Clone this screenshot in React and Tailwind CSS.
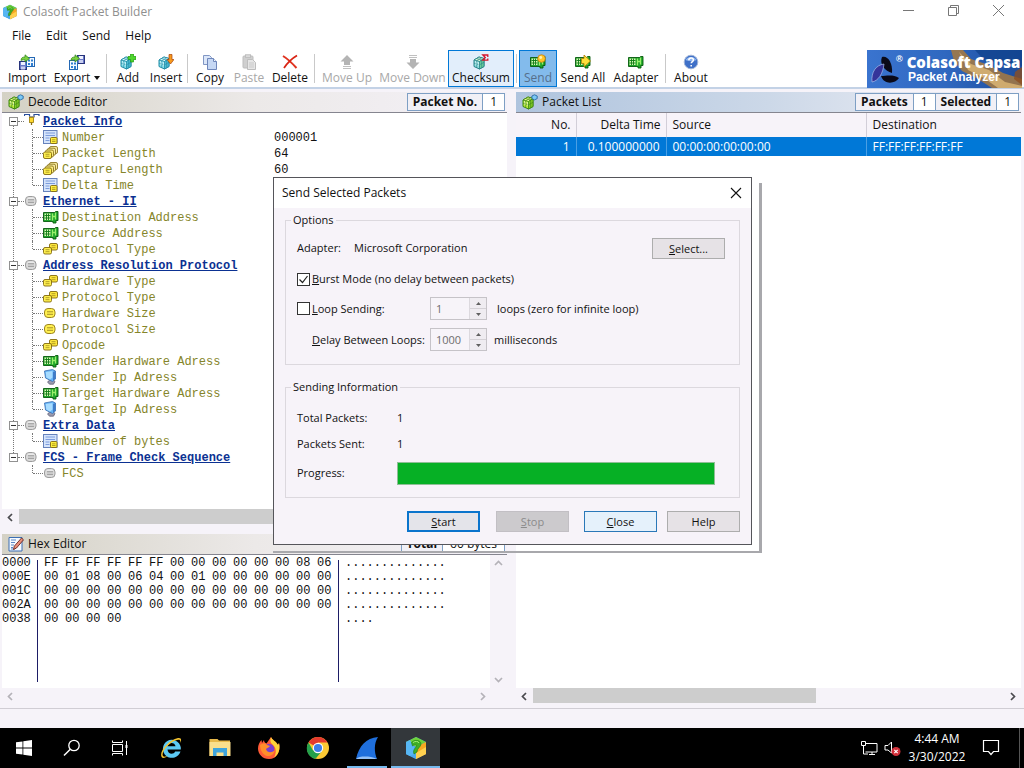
import React from "react";

/* ---------- icons ---------- */

function AppIcon({ className }) {
  return (
    <svg viewBox="0 0 24 24" className={className} aria-hidden="true">
      <path d="M12 1 22 6v12l-10 5L2 18V6z" fill="#3f9be0" />
      <path d="M12 1 22 6l-10 5L2 6z" fill="#6fd23a" />
      <path d="M2 6l10 5v12L2 18z" fill="#4aa8ec" />
      <path d="M22 6l-10 5v12l10-5z" fill="#f6a821" />
      <path d="M22 11l-10 6v6l10-5z" fill="#ffd04f" />
      <path d="M2 6l4-2 4 7v7l-4 2-4-2z" fill="#57b6f3" />
      <path d="M7.500 6.500c3-3.500 9.500-2.500 9.500 1.500 0 3-4 4-4 8l-3 2c-2-5 3.500-7 2.500-9-1-1-3 0-4 1z" fill="#3fae25" stroke="#1f7a14" strokeWidth=".6" />
      <path d="M9 6.500c2-1.500 5.500-1.500 6 .5" fill="none" stroke="#a6ee74" strokeWidth="1" />
    </svg>
  );
}

function Cube({ top, left, right, line, children, className }) {
  return (
    <svg viewBox="0 0 16 16" className={className} aria-hidden="true">
      <path d="M6 3l5 1.5v8L6.500 15 1 12.500V6z" fill={left} stroke={line} strokeWidth="1" strokeLinejoin="round" />
      <path d="M6 3l5 1.500L6.500 7.500 1 6z" fill={top} stroke={line} strokeWidth=".8" strokeLinejoin="round" />
      <path d="M11 4.500v8L6.500 15V7.500z" fill={right} stroke={line} strokeWidth=".8" strokeLinejoin="round" />
      <path d="M3.700 4.500l5 1.500v7.600M8.500 3.800L3.700 6.800v7M1 9.200l5.500 1.600L11 8.300" fill="none" stroke={line} strokeWidth=".6" />
      <path d="M2 7.500l1 .4v3M4.600 8.300l1 .3v3" fill="none" stroke="#fff" strokeWidth=".7" opacity=".8" />
      {children}
    </svg>
  );
}

const blueCube = { top: "#d4f8fa", left: "#86dfeb", right: "#4dbbd2", line: "#1f8aa4" };
const greenCube = { top: "#e6f98a", left: "#b9ea3e", right: "#83cc28", line: "#3b8510" };

function PanelCube({ className }) {
  return (
    <Cube {...greenCube} className={className}>
      <path d="M12.500 .8l2.700 1.200v2.600l-2.700 1.300-2.600-1.300V2z" fill="#7cc8f4" stroke="#1b5f9e" strokeWidth=".8" />
    </Cube>
  );
}
function AddIcon({ className }) {
  return (
    <Cube {...blueCube} className={className}>
      <path d="M10.500 0h3v2.500H16v3h-2.500V8h-3V5.500H8v-3h2.500z" fill="#4fd62c" stroke="#1f9a10" strokeWidth=".7" />
    </Cube>
  );
}
function InsertIcon({ className }) {
  return (
    <Cube {...blueCube} className={className}>
      <path d="M11 .5h3v5h2L12.500 10 9 5.500h2z" fill="#f79a1c" stroke="#a8400b" strokeWidth=".7" />
    </Cube>
  );
}
function ChecksumIcon({ className }) {
  return (
    <Cube top="#d6f7d0" left="#8fe0e0" right="#6ccf9a" line="#247f86" className={className}>
      <path d="M14.800 3V1H9.800l2.500 2.500-2.500 2.700h5V4.500" fill="none" stroke="#d3142a" strokeWidth="1.300" />
    </Cube>
  );
}

function DiskBuilding({ flip, className }) {
  return (
    <svg viewBox="0 0 16 16" className={className} aria-hidden="true">
      <rect x={flip ? 8.500 : .5} y={flip ? 1.500 : 7.500} width="7" height="8" fill="#6a78c8" stroke="#28347c" />
      <rect x={flip ? 10 : 2} y={flip ? 2 : 8} width="4" height="3" fill="#eef2ff" />
      <rect x={flip ? 10 : 2} y={flip ? 6 : 12.500} width="4" height="3" fill="#c9cff0" />
      <rect x={flip ? .5 : 7.500} y={flip ? 6.500 : 3.500} width="8" height="9" fill="#f4f9ff" stroke="#2468b4" />
      <path d={flip ? "M2 8.500h2v2H2zM5 8.500h2v2H5zM2 12h2v2H2zM5 12h2v3H5z" : "M9 5.500h2v2H9zM12 5.500h2v2h-2zM9 9h2v2H9zM12 9h2v3h-2z"} fill="#2f7fd0" />
      <path d="M2 6.500C2 3.500 4 3 6 3V.8l4.500 3.700L6 8V5.800C4 5.800 3 6 2 6.500z" fill="#7ad141" stroke="#2b7d16" strokeWidth=".7" />
    </svg>
  );
}
const ImportIcon = ({ className }) => <DiskBuilding className={className} />;
const ExportIcon = ({ className }) => <DiskBuilding flip className={className} />;

function CopyIcon({ className }) {
  return (
    <svg viewBox="0 0 16 16" className={className} aria-hidden="true">
      <path d="M1.500 1.500h6l2 2v7h-8z" fill="#dbe6f8" stroke="#8197c4" />
      <path d="M5.500 4.500h6l3 3v8h-9z" fill="#c6d8f4" stroke="#6f87bb" />
      <path d="M11.500 4.500v3h3" fill="#f2f6fd" stroke="#6f87bb" />
    </svg>
  );
}
function PasteIcon({ className }) {
  return (
    <svg viewBox="0 0 16 16" className={className} aria-hidden="true">
      <rect x="2" y="2" width="10" height="12" rx="1" fill="#cfcfcf" stroke="#bdbdbd" />
      <rect x="4.500" y=".8" width="5" height="2.600" fill="#ddd" stroke="#bdbdbd" />
      <path d="M6.500 5.500h5l3 3v7h-8z" fill="#e6e6e6" stroke="#bdbdbd" />
      <path d="M8 9h5M8 11h5M8 13h5" stroke="#c9c9c9" />
    </svg>
  );
}
function DeleteIcon({ className }) {
  return (
    <svg viewBox="0 0 16 16" className={className} aria-hidden="true">
      <path d="M1 2c5 3 9 7 13.500 12" fill="none" stroke="#e03420" strokeWidth="2" />
      <path d="M15 1.500C9 5 5 9.500 2 14" fill="none" stroke="#d92414" strokeWidth="1.800" />
    </svg>
  );
}
function UpIcon({ className }) {
  return (
    <svg viewBox="0 0 16 16" className={className} aria-hidden="true">
      <path d="M8 1l6.500 6.500H11V11H5V7.500H1.500z" fill="#b4b4b4" />
      <path d="M4 12.500h8M4 14.500h8" stroke="#c0c0c0" />
    </svg>
  );
}
function DownIcon({ className }) {
  return (
    <svg viewBox="0 0 16 16" className={className} aria-hidden="true">
      <path d="M8 15l6.500-6.500H11V5H5v3.500H1.500z" fill="#b4b4b4" />
      <path d="M4 1.500h8M4 3.500h8" stroke="#c0c0c0" />
    </svg>
  );
}

function NicBody() {
  return (
    <>
      <path d="M.5 2.500h12V1.500h2.500v9h-2V13h-3v-1.500H.5z" fill="#1ea52a" stroke="#07590c" strokeWidth=".9" />
      <rect x="1.500" y="3.500" width="6" height="6.500" fill="#d9f7b4" />
      <path d="M1.500 5.500h6M1.500 8h6M3.500 3.500v6.500M5.500 3.500v6.500" stroke="#0d7a15" strokeWidth=".9" />
      <path d="M9.500 3.500v7M12.500 2.500v7M9.500 6.500h3" stroke="#9af06a" strokeWidth="1.300" />
    </>
  );
}
function NicIcon({ className }) {
  return (
    <svg viewBox="0 0 16 16" className={className} aria-hidden="true"><g transform="translate(0 1)"><NicBody /></g></svg>
  );
}
function SendIcon({ className }) {
  return (
    <svg viewBox="0 0 16 16" className={className} aria-hidden="true">
      <g transform="translate(0 1)"><NicBody /></g>
      <circle cx="11.500" cy="4.500" r="3.800" fill="#ffc529" stroke="#c47a0a" strokeWidth=".7" />
      <circle cx="10.700" cy="3.500" r="1.400" fill="#fff3b0" />
    </svg>
  );
}
function SendAllIcon({ className }) {
  return (
    <svg viewBox="0 0 16 16" className={className} aria-hidden="true">
      <g transform="translate(0 1)"><NicBody /></g>
      <path d="M9 1l6.500 6L9 13V9.500H6.500v-5H9z" fill="#ffe03a" stroke="#a97c06" strokeWidth=".8" />
    </svg>
  );
}
function AboutIcon({ className }) {
  return (
    <svg viewBox="0 0 16 16" className={className} aria-hidden="true">
      <circle cx="8" cy="8" r="6.800" fill="#3f70c8" stroke="#9fb4d8" />
      <path d="M2.500 6a6 5 0 0 1 11 0c-3 1.500-8 1.500-11 0z" fill="#8db4ee" />
      <path d="M5.800 6.200c0-3 4.600-3 4.600-.3 0 1.600-2.200 1.700-2.200 3.400M8.200 11v1.500" fill="none" stroke="#fff" strokeWidth="1.500" />
    </svg>
  );
}

/* tree icons */
function ProbeIcon({ className }) {
  return (
    <svg viewBox="0 0 16 16" className={className} aria-hidden="true">
      <path d="M.5 3V1.500h5v1.800M10 3.300V1.500h5V3" fill="none" stroke="#2a4f9c" strokeWidth="1.200" />
      <path d="M5 3.800h6" stroke="#6b6b6b" />
      <rect x="5.500" y="4.500" width="4" height="5" fill="#ffd92e" stroke="#9a7a06" strokeWidth=".8" />
      <path d="M7.500 9.500V12" stroke="#8a6d10" strokeWidth="1.300" />
    </svg>
  );
}
function GreyIcon({ className }) {
  return (
    <svg viewBox="0 0 16 16" className={className} aria-hidden="true">
      <rect x="1.500" y="3.500" width="10.500" height="9" rx="3.500" fill="#d9d9d9" stroke="#9c9c9c" />
      <path d="M4 6.800h6M4 9.300h6" stroke="#8e8e8e" strokeWidth=".9" />
      <path d="M3.500 5.200h6.500" stroke="#f8f8f8" strokeWidth=".8" />
    </svg>
  );
}
function ByteIcon({ className }) {
  return (
    <svg viewBox="0 0 16 16" className={className} aria-hidden="true">
      <rect x="1.500" y="3.500" width="10.500" height="9" rx="3.500" fill="#fff04f" stroke="#9c8420" />
      <path d="M4 6.800h6M4 9.300h6" stroke="#9c8420" strokeWidth=".9" />
    </svg>
  );
}
function PairIcon({ className }) {
  return (
    <svg viewBox="0 0 16 16" className={className} aria-hidden="true">
      <rect x="6.500" y="2.500" width="8" height="6.500" rx="1.500" fill="#ffe83c" stroke="#82690f" strokeWidth=".9" />
      <path d="M8.500 4.700h4M8.500 6.700h4" stroke="#a08a1a" strokeWidth=".8" />
      <rect x=".5" y="6.500" width="8" height="6.500" rx="1.500" fill="#fff04f" stroke="#82690f" strokeWidth=".9" />
      <path d="M2.500 8.700h4M2.500 10.700h4" stroke="#a08a1a" strokeWidth=".8" />
    </svg>
  );
}
function StackIcon({ className }) {
  return (
    <svg viewBox="0 0 16 16" className={className} aria-hidden="true">
      <rect x="6.500" y="1.500" width="8" height="7" rx="1.500" fill="#f7eaa0" stroke="#82690f" strokeWidth=".8" />
      <rect x="4.500" y="3.200" width="8" height="7" rx="1.500" fill="#f7eaa0" stroke="#82690f" strokeWidth=".8" />
      <rect x="2.500" y="5" width="8" height="7" rx="1.500" fill="#f9ea80" stroke="#82690f" strokeWidth=".8" />
      <rect x=".5" y="7" width="8" height="6.500" rx="1.500" fill="#fff04f" stroke="#82690f" strokeWidth=".9" />
      <path d="M2.500 9.300h4M2.500 11.200h4" stroke="#a08a1a" strokeWidth=".8" />
    </svg>
  );
}
function FieldIcon({ className }) {
  return (
    <svg viewBox="0 0 16 16" className={className} aria-hidden="true">
      <rect x=".5" y="1.500" width="13.500" height="13" fill="#d5e4fb" stroke="#6682bc" />
      <path d="M2.500 4h9.500M2.500 6.500h9.500M2.500 9h4M2.500 11.500h4" stroke="#7c9cdc" />
      <rect x="7.500" y="8.500" width="6.500" height="6" rx="1" fill="#fff03c" stroke="#82690f" strokeWidth=".9" />
      <path d="M9 10.800h3.500M9 12.500h3.500" stroke="#9a8315" strokeWidth=".7" />
    </svg>
  );
}
function HostIcon({ className }) {
  return (
    <svg viewBox="0 0 16 16" className={className} aria-hidden="true">
      <path d="M4.500 13c1-2 6-2.500 7.500-.5l-1.500 2.700H6.500z" fill="#9a9aae" stroke="#55556c" strokeWidth=".7" />
      <path d="M1.500 2l8-1.500 3 1.500v8L9.500 12.500 2.500 9z" fill="#64b4f6" stroke="#3a6cb0" strokeWidth=".8" />
      <path d="M2.700 3l6.800-1v6.500L7 10.500 3.300 8.500z" fill="#a8dcff" />
      <path d="M12.500 2L10 3v9l2.500-2.500z" fill="#3f7cc8" />
    </svg>
  );
}
function HexIcon({ className }) {
  return (
    <svg viewBox="0 0 16 16" className={className} aria-hidden="true">
      <path d="M1 1.500h13v13.500H1z" fill="#f6faff" stroke="#3c6fb4" />
      <path d="M3 4h5M3 6.500h4M3 9h3M3 11.500h2M3 13h4" stroke="#5b86c4" />
      <path d="M13.500 2l2 1.800L8.500 12l-3 1.500.8-3.300z" fill="#e98f7c" stroke="#6b2419" strokeWidth=".9" />
    </svg>
  );
}

/* ---------- shared pieces ---------- */

function Chevron({ dir, className }) {
  const paths = {
    left: "M6 1 2.500 4.500 6 8",
    right: "M3 1l3.500 3.500L3 8",
    up: "M1 6l3.500-3.500L8 6",
    down: "M1 3l3.500 3.500L8 3",
  };
  return (
    <svg viewBox="0 0 9 9" className={className} aria-hidden="true">
      <path d={paths[dir]} fill="none" stroke="currentColor" strokeWidth="1.700" />
    </svg>
  );
}

function Badge({ label, value }) {
  return (
    <div className="flex h-full">
      <span className="flex items-center border border-[#7e9fc4] bg-[#f1f0f6] px-[5px] font-bold">{label}</span>
      <span className="flex items-center border border-l-0 border-[#7e9fc4] bg-white px-[7px]">{value}</span>
    </div>
  );
}

function PanelHeader({ icon: Icon, title, tone, children }) {
  return (
    <header className={"flex h-5 shrink-0 items-center border-b border-[#85858f] box-content " + tone}>
      <Icon className="ml-1.5 size-4 shrink-0" />
      <h2 className="ml-1 min-w-0 flex-1 truncate">{title}</h2>
      <div className="mr-0.5 flex h-[18px]">{children}</div>
    </header>
  );
}

const beige = "bg-linear-to-r from-[#d4d1c5] via-[#ece9e8] to-[#f4f1f8]";
const blue = "bg-linear-to-r from-[#afc4de] via-[#ccd8e8] to-[#f4f2f7]";

/* ---------- toolbar ---------- */

const toolGroups = [
  [
    { label: "Import", icon: ImportIcon, w: "w-[46px]" },
    { label: "Export", icon: ExportIcon, w: "w-[54px]", menu: true },
  ],
  [
    { label: "Add", icon: AddIcon, w: "w-[38px]" },
    { label: "Insert", icon: InsertIcon, w: "w-[38px]" },
  ],
  [
    { label: "Copy", icon: CopyIcon, w: "w-10" },
    { label: "Paste", icon: PasteIcon, w: "w-[38px]", off: true },
    { label: "Delete", icon: DeleteIcon, w: "w-11" },
  ],
  [
    { label: "Move Up", icon: UpIcon, w: "w-[60px]", off: true },
    { label: "Move Down", icon: DownIcon, w: "w-[71px]", off: true },
    { label: "Checksum", icon: ChecksumIcon, w: "w-[66px]", look: "border-[#0078d7] bg-[#e2eefb]" },
  ],
  [
    { label: "Send", icon: SendIcon, w: "w-[38px]", look: "border-[#0078d7] bg-[#83bbec] text-[#566f8c]" },
    { label: "Send All", icon: SendAllIcon, w: "w-[52px]" },
    { label: "Adapter", icon: NicIcon, w: "w-[54px]" },
  ],
  [{ label: "About", icon: AboutIcon, w: "w-[46px]" }],
];

function ToolButton({ label, icon: Icon, w, menu, off, look }) {
  return (
    <button
      type="button"
      disabled={off}
      className={
        "flex h-[37px] shrink-0 flex-col items-center justify-end whitespace-nowrap border disabled:text-[#a8a8a8] " +
        w + " " + (look || "border-transparent")
      }
    >
      <Icon className="size-4 shrink-0" />
      <span className="flex h-4 items-center gap-1">
        {label}
        {menu && (
          <svg viewBox="0 0 6 4" className="w-1.5" aria-hidden="true"><path d="M0 0h6L3 4z" fill="#111" /></svg>
        )}
      </span>
    </button>
  );
}

function Banner() {
  return (
    <div className="relative flex h-[38px] w-[155px] shrink-0 overflow-hidden bg-linear-to-r from-[#3a74cf] via-[#2f68c0] to-[#1c4c9c] font-['Liberation_Sans',sans-serif] text-white">
      <svg viewBox="0 0 155 38" className="absolute inset-0 size-full" aria-hidden="true">
        <path d="M84 0h12l8 9 18 6 14 8 19 6v9h-30l-14-9-16-8-8-10z" fill="#a87a40" opacity=".85" />
        <path d="M92 2l12 12 18 6 16 12 17 4v2h-24l-14-10-16-8z" fill="#e3bd7a" opacity=".75" />
        <path d="M108 0h47v16l-20-5-16 1z" fill="#12448f" opacity=".8" />
        <path d="M148 22l7-5v18l-8-6z" fill="#8c4f22" opacity=".8" />
        <path d="M15 7c5-2 11 5 10 16-7-2-13-9-10-16z" fill="#0a0a18" />
        <path d="M17 14c-8 1-13 8-12 18 6-1 11-8 12-18z" fill="#35349a" stroke="#a9bce8" strokeWidth=".7" />
        <path d="M14 26c5 0 12-2 18 2-4 6-15 7-18-2z" fill="#0a0a18" />
      </svg>
      <div className="relative ml-[29px] flex flex-col leading-none">
        <div className="mt-1 flex text-[16px] font-bold leading-[16px]">
          <span className="mr-1 text-[9px] leading-[10px]">®</span>
          <span className="whitespace-nowrap font-['Open_Sans',sans-serif] text-[15px] font-extrabold">Colasoft Capsa</span>
        </div>
        <span className="ml-3 whitespace-nowrap text-[12px] font-bold leading-[14px]">Packet Analyzer</span>
      </div>
    </div>
  );
}

/* ---------- decode tree ---------- */

const tree = [
  {
    label: "Packet Info", icon: ProbeIcon, items: [
      { label: "Number", icon: FieldIcon, value: "000001" },
      { label: "Packet Length", icon: StackIcon, value: "64" },
      { label: "Capture Length", icon: StackIcon, value: "60" },
      { label: "Delta Time", icon: FieldIcon },
    ],
  },
  {
    label: "Ethernet - II", icon: GreyIcon, items: [
      { label: "Destination Address", icon: NicIcon },
      { label: "Source Address", icon: NicIcon },
      { label: "Protocol Type", icon: PairIcon },
    ],
  },
  {
    label: "Address Resolution Protocol", icon: GreyIcon, items: [
      { label: "Hardware Type", icon: PairIcon },
      { label: "Protocol Type", icon: PairIcon },
      { label: "Hardware Size", icon: ByteIcon },
      { label: "Protocol Size", icon: ByteIcon },
      { label: "Opcode", icon: PairIcon },
      { label: "Sender Hardware Adress", icon: NicIcon },
      { label: "Sender Ip Adress", icon: HostIcon },
      { label: "Target Hardware Adress", icon: NicIcon },
      { label: "Target Ip Adress", icon: HostIcon },
    ],
  },
  { label: "Extra Data", icon: GreyIcon, items: [{ label: "Number of bytes", icon: FieldIcon }] },
  { label: "FCS - Frame Check Sequence", icon: GreyIcon, items: [{ label: "FCS", icon: GreyIcon }] },
];

function TreeGroup({ group, last }) {
  const Icon = group.icon;
  return (
    <li className="relative">
      {!last && <span className="absolute bottom-0 left-[11px] top-2 -mb-2 border-l border-dotted border-[#777]" />}
      <div className="relative flex h-4 items-center pl-[7px]">
        <button type="button" aria-label={"Collapse " + group.label} className="flex size-[9px] items-center justify-center border border-[#919191] bg-white">
          <span className="h-px w-[5px] bg-[#333]" />
        </button>
        <span className="w-1.5 border-t border-dotted border-[#777]" />
        <Icon className="size-4 shrink-0" />
        <a href="#" className="ml-[3px] whitespace-nowrap pt-0.5 font-bold text-[#0b3192] underline">{group.label}</a>
      </div>
      <ul>
        {group.items.map((item, i) => {
          const ItemIcon = item.icon;
          const end = i === group.items.length - 1;
          return (
            <li key={item.label} className="flex h-4 items-center pl-[30px]">
              <span className={"w-px self-start border-l border-dotted border-[#777] " + (end ? "h-2" : "h-4")} />
              <span className="w-2.5 border-t border-dotted border-[#777]" />
              <ItemIcon className="size-4 shrink-0" />
              <span className="ml-[3px] w-[212px] whitespace-nowrap pt-0.5 text-[#85852a]">{item.label}</span>
              <span className="pt-0.5">{item.value}</span>
            </li>
          );
        })}
      </ul>
    </li>
  );
}

function ScrollX({ muted, thumb }) {
  const tone = muted ? "pr-4 text-[#b4b2b8]" : "text-[#4a4a4e]";
  return (
    <div className={"flex h-4 shrink-0 items-center bg-[#f6f3f9] " + tone}>
      <span className="flex w-[17px] justify-center"><Chevron dir="left" className="size-[9px]" /></span>
      <div className="h-full flex-1">{thumb && <div className={"h-[15px] bg-[#cdcdcd] " + thumb} />}</div>
      <span className="flex w-[17px] justify-center"><Chevron dir="right" className="size-[9px]" /></span>
    </div>
  );
}

/* ---------- hex view ---------- */

const hexRows = [
  ["0000", "FF FF FF FF FF FF 00 00 00 00 00 00 08 06"],
  ["000E", "00 01 08 00 06 04 00 01 00 00 00 00 00 00"],
  ["001C", "00 00 00 00 00 00 00 00 00 00 00 00 00 00"],
  ["002A", "00 00 00 00 00 00 00 00 00 00 00 00 00 00"],
  ["0038", "00 00 00 00"],
];

function HexView() {
  return (
    <div className="flex h-[133px] shrink-0">
      <div className="flex flex-1 bg-white pb-1.5 pt-px font-['Liberation_Mono',monospace] text-[12px] leading-[14px]">
        <div className="w-[35px]">
          {hexRows.map(([addr]) => <div key={addr}>{addr}</div>)}
        </div>
        <div className="mt-1 w-[301px] border-l border-[#1d1d66] pl-1.5">
          <div className="-mt-1">
            {hexRows.map(([addr, bytes]) => (
              <div key={addr} className="grid grid-cols-14">
                {bytes.split(" ").map((b, i) => <span key={i}>{b}</span>)}
              </div>
            ))}
          </div>
        </div>
        <div className="mt-1 border-l border-[#1d1d66] pl-1.5">
          <div className="-mt-1">
            {hexRows.map(([addr, bytes]) => (
              <div key={addr}>{".".repeat(bytes.split(" ").length)}</div>
            ))}
          </div>
        </div>
      </div>
      <div className="flex w-[17px] flex-col items-center justify-between bg-[#f6f3f9] py-1 text-[#b4b2b8]">
        <Chevron dir="up" className="size-[9px]" />
        <Chevron dir="down" className="size-[9px]" />
      </div>
    </div>
  );
}

/* ---------- dialog ---------- */

function DialogButton({ children, look, disabled }) {
  return (
    <button type="button" disabled={disabled} className={"h-[21px] w-[73px] shrink-0 text-center leading-[17px] " + look}>
      {children}
    </button>
  );
}
const plainBtn = "border border-[#adadad] bg-[#e6e2e6]";

function Spinner({ id, value }) {
  return (
    <span className="flex h-[23px] w-[57px] border border-[#c6c3c8] bg-[#f7f4f9]">
      <input id={id} disabled defaultValue={value} className="w-[38px] min-w-0 pl-[5px] text-[#6d6d6d]" />
      <span className="flex flex-1 flex-col border-l border-[#dcd9de] bg-[#efecf1]">
        <button type="button" disabled aria-label="Increase" className="flex flex-1 items-center justify-center border-b border-[#d4d1d6]">
          <svg viewBox="0 0 5 3" className="w-[5px]" aria-hidden="true"><path d="M0 3h5L2.500 0z" fill="#606060" /></svg>
        </button>
        <button type="button" disabled aria-label="Decrease" className="flex flex-1 items-center justify-center">
          <svg viewBox="0 0 5 3" className="w-[5px]" aria-hidden="true"><path d="M0 0h5L2.500 3z" fill="#606060" /></svg>
        </button>
      </span>
    </span>
  );
}

function Check({ id, checked }) {
  return (
    <span className="relative flex size-[13px]">
      <input id={id} type="checkbox" defaultChecked={checked} className="peer size-[13px] appearance-none border border-[#333] bg-white" />
      <svg viewBox="0 0 13 13" className="pointer-events-none absolute inset-0 hidden peer-checked:block" aria-hidden="true">
        <path d="M2.500 6.500l3 3 5-6.500" fill="none" stroke="#222" strokeWidth="1.200" />
      </svg>
    </span>
  );
}

function SendDialog() {
  return (
    <section role="dialog" aria-labelledby="send-title" className="absolute left-[273px] top-[177px] w-[479px] font-['Open_Sans',sans-serif] text-[11px] text-[#111]">
      <div className="absolute -bottom-2 -right-2.5 left-0 top-1.5 border-b-2 border-r-3 border-[#a8a8ac]" />
      <div className="relative border border-[#55555a] bg-[#f7f3f9]">
        <div className="flex h-[30px] items-center bg-white pl-2 pr-[9px]">
          <h2 id="send-title" className="flex-1 text-[12px]">Send Selected Packets</h2>
          <button type="button" aria-label="Close dialog">
            <svg viewBox="0 0 12 12" className="size-3" aria-hidden="true"><path d="M1 1l10 10M11 1L1 11" stroke="#111" strokeWidth="1.100" /></svg>
          </button>
        </div>
        <div className="px-[11px] pb-3 pt-1">
          <fieldset className="h-[153px] border border-[#dcd8de] pl-[11px]">
            <legend className="-ml-1.5 px-0.5 leading-4">Options</legend>
            <div className="flex h-10 items-center pr-3.5">
              <span className="w-[57px]">Adapter:</span>
              <span className="flex-1">Microsoft Corporation</span>
              <DialogButton look={plainBtn}><u>S</u>elect...</DialogButton>
            </div>
            <div className="flex h-[22px] items-center gap-0.5">
              <Check id="burst" checked />
              <label htmlFor="burst"><u>B</u>urst Mode (no delay between packets)</label>
            </div>
            <div className="mt-[3px] flex h-[31px] items-center">
              <span className="flex w-[133px] items-center gap-0.5">
                <Check id="loop" />
                <label htmlFor="loop"><u>L</u>oop Sending:</label>
              </span>
              <Spinner id="loops" value="1" />
              <label htmlFor="loops" className="ml-2.5">loops (zero for infinite loop)</label>
            </div>
            <div className="flex h-[31px] items-center">
              <label htmlFor="delay" className="w-[133px] whitespace-nowrap pl-[15px]"><u>D</u>elay Between Loops:</label>
              <Spinner id="delay" value="1000" />
              <span className="ml-[7px]">milliseconds</span>
            </div>
          </fieldset>
          <fieldset className="mt-3.5 h-[119px] border border-[#dcd8de] pl-[11px]">
            <legend className="-ml-1.5 px-0.5 leading-4">Sending Information</legend>
            <dl className="grid grid-cols-[100px_1fr] items-center pr-6 pt-2.5">
              <dt className="leading-[26px]">Total Packets:</dt><dd>1</dd>
              <dt className="leading-[26px]">Packets Sent:</dt><dd>1</dd>
              <dt className="leading-[32px]">Progress:</dt>
              <dd className="h-[23px] border border-[#8fbf96] bg-[#06b025]" role="progressbar" aria-label="Progress" aria-valuenow="100" />
            </dl>
          </fieldset>
          <div className="mt-[13px] flex justify-end">
            <DialogButton look="border-2 border-[#0a74cc] bg-[#e4e4ea]"><u>S</u>tart</DialogButton>
            <span className="w-4" />
            <DialogButton disabled look="border border-[#c2bfc4] bg-[#cccacd] text-[#8b8b8b]"><u>S</u>top</DialogButton>
            <span className="w-[15px]" />
            <DialogButton look="border border-[#2a78b8] bg-[#e5f1fb]"><u>C</u>lose</DialogButton>
            <span className="w-2.5" />
            <DialogButton look={plainBtn}>Help</DialogButton>
          </div>
        </div>
      </div>
    </section>
  );
}

/* ---------- taskbar ---------- */

function TaskButton({ label, className, children }) {
  return (
    <button type="button" aria-label={label} className={"flex h-full items-center justify-center " + className}>
      {children}
    </button>
  );
}

function Taskbar() {
  return (
    <footer className="flex h-10 shrink-0 bg-black font-['Open_Sans',sans-serif] text-[12px] text-white">
      <TaskButton label="Start" className="w-12">
        <svg viewBox="0 0 16 16" className="size-4"><path d="M0 2.300l6.500-.9v6.200H0zM7.300 1.300L16 0v7.600H7.300zM0 8.400h6.500v6.200L0 13.700zM7.300 8.400H16V16l-8.700-1.300z" fill="#fff" /></svg>
      </TaskButton>
      <TaskButton label="Search" className="w-12">
        <svg viewBox="0 0 18 18" className="size-[18px]"><circle cx="11" cy="6.500" r="5.200" fill="none" stroke="#fff" strokeWidth="1.300" /><path d="M7.300 10.200L1 16.500" stroke="#fff" strokeWidth="1.500" /></svg>
      </TaskButton>
      <TaskButton label="Task View" className="w-12">
        <svg viewBox="0 0 18 18" className="size-[18px]"><path d="M1.500 1.500v2h10v-2M1.500 16.500v-2h10v2M1.500 5.500h10v7h-10zM15.500 2v14" fill="none" stroke="#fff" /><path d="M14.500 6h2v3h-2z" fill="#fff" /></svg>
      </TaskButton>
      <TaskButton label="Internet Explorer" className="ml-0.5 w-[49px]">
        <svg viewBox="0 0 24 24" className="size-6">
          <path d="M21.500 15.500A9 9 0 1 1 21.800 11.500v2H8.500c.3 4.800 6 5.500 7.700 2z" fill="#5ccaf5" />
          <path d="M8.500 10.300h8c-.4-4.500-7.500-4.500-8 0z" fill="#000" />
          <path d="M3 21.500C-1 17 9 4 19 2c4-.6 3.500 3 2 5 .6-2 .4-3.700-2-3.300C11 5 1.500 16 4 20c1 1.400 3.500.5 5-.5-2 2-4.600 3.200-6 2z" fill="#f5c431" />
        </svg>
      </TaskButton>
      <TaskButton label="File Explorer" className="w-[49px]">
        <svg viewBox="0 0 24 24" className="size-6"><path d="M1.500 3h8l1.500 1.500h11V20h-20.500z" fill="#e9b94a" /><path d="M1.500 6h21v14h-21z" fill="#fbdf8c" /><path d="M5 20v-8h14v8h-3.500v-3.500h-7V20z" fill="#3fa4dc" /></svg>
      </TaskButton>
      <TaskButton label="Firefox" className="w-[49px]">
        <svg viewBox="0 0 24 24" className="size-6">
          <path d="M12 23C5.500 23 1 18 1 12.500 1 9 2.500 6 4.500 4l.5 3 2-3c0 2 1 3 2.500 3.500L14 1c1 3 5 4 7 8l1-2c2 8-2 16-10 16z" fill="#ff5a36" />
          <path d="M14 1c1 3 5 4 7 8l1-2c1.500 6-.5 12-5 14.500 3-5 2-10-1.500-13C13 6.500 13 4 14 1z" fill="#ffd33a" />
          <circle cx="12" cy="13" r="5.300" fill="#7a3fd0" />
          <path d="M3 9c3-2 6-2 7 0l3 1c-1 2-3 1.500-4 3 1 4 6 4 8.500 1.500C17 19 13 20.500 10 20c-4-1-7-6-7-11z" fill="#ff8f2a" />
        </svg>
      </TaskButton>
      <TaskButton label="Chrome" className="w-[49px]">
        <svg viewBox="0 0 24 24" className="size-6">
          <circle cx="12" cy="12" r="11" fill="#fcc934" />
          <path d="M12 12L2.500 6.500A11 11 0 0 1 21.500 6.500H12z" fill="#e53a2e" />
          <path d="M12 12l-3 11A11 11 0 0 1 2.500 6.500L7 14.500z" fill="#25a04b" />
          <path d="M9.500 22.800L16.500 14.500 12 17l-4.800-2.700z" fill="#25a04b" />
          <circle cx="12" cy="12" r="5.200" fill="#fff" /><circle cx="12" cy="12" r="4.100" fill="#3f7ee8" />
        </svg>
      </TaskButton>
      <TaskButton label="Wireshark" className="w-[49px] flex-col">
        <span className="flex flex-1 items-center pt-0.5"><svg viewBox="0 0 24 24" className="size-6"><path d="M1 23C4 10 11 2 23 1c-4 6-4 15-1 22z" fill="#1f6fdc" /><path d="M1 23c2-2 5-2.500 9-2.500s8 .5 12 2.500z" fill="#bcdcff" opacity=".75" /></svg></span>
        <span className="h-0.5 w-10 bg-[#76b9ed]" />
      </TaskButton>
      <TaskButton label="Packet Builder" className="w-[49px] flex-col bg-[#33373b]">
        <span className="flex flex-1 items-center pt-0.5"><AppIcon className="size-6" /></span>
        <span className="h-0.5 w-full bg-[#76b9ed]" />
      </TaskButton>
      <div className="ml-auto flex items-center">
        <svg viewBox="0 0 18 16" className="h-4 w-[18px]" aria-label="Network"><path d="M5 3.500h12v8.500H5.500M9 14.500h6M12 12v2.500M1.500 1.500h4v4h-4zM3.500 5.500v8.500H8" fill="none" stroke="#fff" /></svg>
        <svg viewBox="0 0 18 18" className="ml-1.5 size-[18px]" aria-label="Muted"><path d="M1 6.500h3L7.500 3v11L4 11H1z" fill="none" stroke="#fff" /><circle cx="12" cy="12.500" r="4.500" fill="#d1303a" /><path d="M10.300 10.800l3.400 3.400M13.700 10.800l-3.400 3.400" stroke="#fff" strokeWidth="1.200" /></svg>
        <div className="flex w-[70px] flex-col items-center leading-[18px]"><span>4:44 AM</span><span>3/30/2022</span></div>
        <svg viewBox="0 0 18 18" className="ml-2.5 size-[18px]" aria-label="Notifications"><path d="M1.500 1.500h15v11h-5L9 15.500l-2.500-3h-5z" fill="none" stroke="#fff" strokeWidth="1.200" /></svg>
        <span className="ml-[19px] mr-1 h-10 w-px bg-[#555]" />
      </div>
    </footer>
  );
}

/* ---------- page ---------- */

export default function App() {
  return (
    <div className="relative flex min-h-screen flex-col bg-[#f6f3f9] font-['Open_Sans',sans-serif] text-[12px] leading-4 text-[#111]">
      <div className="flex h-6 items-center bg-white pl-0.5 pr-5 text-[#8f8f8f]">
        <AppIcon className="size-4" />
        <h1 className="ml-[5px] flex-1">Colasoft Packet Builder</h1>
        <div className="-mt-1 flex items-center gap-[34px]">
          <button type="button" aria-label="Minimize"><svg viewBox="0 0 11 11" className="size-[11px]"><path d="M0 5.500h11" stroke="#777" /></svg></button>
          <button type="button" aria-label="Restore"><svg viewBox="0 0 11 11" className="size-[11px]"><path d="M.5 2.500h8v8h-8zM2.500 2.500v-2h8v8h-2" fill="none" stroke="#777" /></svg></button>
          <button type="button" aria-label="Close"><svg viewBox="0 0 11 11" className="size-[11px]"><path d="M0 0l11 11M11 0L0 11" stroke="#777" /></svg></button>
        </div>
      </div>
      <nav className="flex h-6 items-center gap-[15px] bg-white pl-3">
        {["File", "Edit", "Send", "Help"].map((m) => <button key={m} type="button">{m}</button>)}
      </nav>
      <div className="flex h-[41px] items-start border-b-2 border-[#c3d2e6] bg-white pl-1 pr-0.5 pt-0.5">
        {toolGroups.map((group, i) => (
          <div key={i} className="flex">
            {i > 0 && <span className="mx-0.5 my-1 w-px bg-[#c9c9c9]" />}
            {group.map((tool) => <ToolButton key={tool.label} {...tool} />)}
          </div>
        ))}
        <div className="ml-auto"><Banner /></div>
      </div>

      <main className="flex flex-1 pt-[3px]">
        <div className="flex w-[507px] shrink-0 flex-col pl-0.5">
          <section className="flex flex-1 flex-col">
            <PanelHeader icon={PanelCube} title="Decode Editor" tone={beige}>
              <Badge label="Packet No." value="1" />
            </PanelHeader>
            <ul className="flex-1 bg-white font-['Liberation_Mono',monospace] text-[12px]">
              {tree.map((g, i) => <TreeGroup key={g.label} group={g} last={i === tree.length - 1} />)}
            </ul>
            <ScrollX thumb="w-2/3" />
          </section>
          <section className="mt-[9px] flex shrink-0 flex-col">
            <PanelHeader icon={HexIcon} title="Hex Editor" tone={beige}>
              <Badge label="Total" value="60 bytes" />
            </PanelHeader>
            <HexView />
            <ScrollX muted />
          </section>
        </div>
        <section className="ml-[9px] mr-[3px] flex min-w-0 flex-1 flex-col">
          <PanelHeader icon={PanelCube} title="Packet List" tone={blue}>
            <Badge label="Packets" value="1" />
            <div className="-ml-px"><Badge label="Selected" value="1" /></div>
          </PanelHeader>
          <div className="flex-1 bg-white">
            <table className="w-full table-fixed border-collapse">
              <colgroup>
                <col className="w-[60px]" /><col className="w-[90px]" /><col className="w-[200px]" /><col />
              </colgroup>
              <thead>
                <tr className="h-6 bg-[#f7f3f9]">
                  <th className="border-r border-[#d2ced8] pr-[5px] text-right font-normal">No.</th>
                  <th className="border-r border-[#d2ced8] pr-[5px] text-right font-normal">Delta Time</th>
                  <th className="border-r border-[#d2ced8] pl-1.5 text-left font-normal">Source</th>
                  <th className="pl-1.5 text-left font-normal">Destination</th>
                </tr>
              </thead>
              <tbody>
                <tr className="h-[19px] bg-[#0078d7] text-white">
                  <td className="border-r border-[#4a9fe4] pr-1.5 text-right">1</td>
                  <td className="border-r border-[#4a9fe4] pr-1.5 text-right">0.100000000</td>
                  <td className="border-r border-[#4a9fe4] pl-1.5">00:00:00:00:00:00</td>
                  <td className="pl-1.5">FF:FF:FF:FF:FF:FF</td>
                </tr>
              </tbody>
            </table>
          </div>
          <ScrollX thumb="w-3/5" />
        </section>
      </main>
      <div className="mt-1 h-5 shrink-0 border-t border-[#d0cdd4]" />
      <Taskbar />
      <SendDialog />
    </div>
  );
}
